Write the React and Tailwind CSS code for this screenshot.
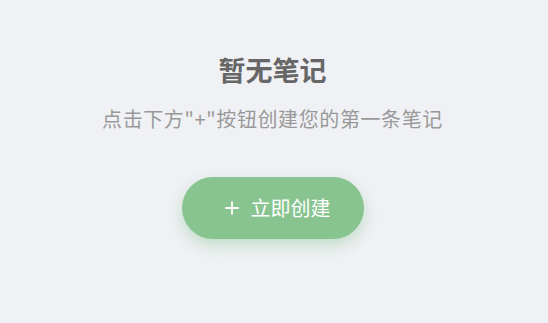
export default function App() {
  return (
    <div
      className="flex min-h-screen w-full flex-col items-center bg-[#f0f1f5] pr-[3px] pt-[51px]"
      style={{ fontFamily: '"Noto Sans CJK SC", "Noto Sans", sans-serif' }}
    >
      <h2 className="text-[27px] font-bold leading-[37px] text-[#666666]">暂无笔记</h2>
      <p className="mt-[17px] text-[20px] leading-[28px] tracking-[0.6px] text-[#999999]">
        点击下方"+"按钮创建您的第一条笔记
      </p>
      <button className="mt-[44px] flex h-[62px] w-[182px] items-center justify-center gap-[12px] rounded-full bg-[#88c48f] pl-[10px] text-white shadow-[0_6px_16px_rgba(136,196,143,0.45)]">
        <svg width="14" height="14" viewBox="0 0 14 14" fill="none" stroke="currentColor" strokeWidth="1.8" strokeLinecap="round">
          <path d="M7 1v12M1 7h12" />
        </svg>
        <span className="text-[20px] leading-[28px]">立即创建</span>
      </button>
    </div>
  );
}
